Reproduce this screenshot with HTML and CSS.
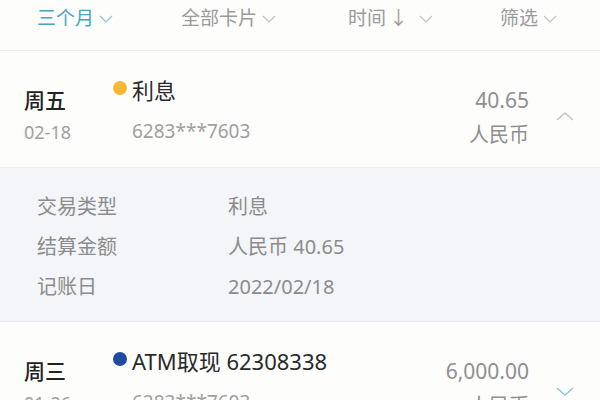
FILE: index.html
```html
<!DOCTYPE html>
<html lang="zh-CN">
<head>
  <meta charset="UTF-8" />
  <title>交易明细</title>
  <link rel="stylesheet" href="styles.css">
</head>
<body>
  <div class="tabs">
    <div class="tab active">三个月<svg class="caret" viewBox="0 0 14 8"><path d="M1 1l6 6 6-6"/></svg></div>
    <div class="tab">全部卡片<svg class="caret" viewBox="0 0 14 8"><path d="M1 1l6 6 6-6"/></svg></div>
    <div class="tab">时间<span class="sort">↓</span><svg class="caret" viewBox="0 0 14 8"><path d="M1 1l6 6 6-6"/></svg></div>
    <div class="tab">筛选<svg class="caret" viewBox="0 0 14 8"><path d="M1 1l6 6 6-6"/></svg></div>
  </div>

  <div class="record">
    <div class="day">
      <div class="weekday">周五</div>
      <div class="date">02-18</div>
    </div>
    <div class="info">
      <div class="title"><span class="dot yellow"></span>利息</div>
      <div class="card">6283***7603</div>
    </div>
    <div class="amount">
      <div class="money">40.65</div>
      <div class="currency">人民币</div>
    </div>
    <div class="toggle">
      <svg class="arrow up" viewBox="0 0 18 9"><path d="M1 8l8-7 8 7"/></svg>
    </div>
  </div>

  <div class="details">
    <div class="detail-row"><span class="label">交易类型</span><span class="value">利息</span></div>
    <div class="detail-row"><span class="label">结算金额</span><span class="value">人民币 40.65</span></div>
    <div class="detail-row"><span class="label">记账日</span><span class="value">2022/02/18</span></div>
  </div>

  <div class="record">
    <div class="day">
      <div class="weekday">周三</div>
      <div class="date">01-26</div>
    </div>
    <div class="info">
      <div class="title"><span class="dot blue"></span>ATM取现 62308338</div>
      <div class="card">6283***7603</div>
    </div>
    <div class="amount">
      <div class="money">6,000.00</div>
      <div class="currency">人民币</div>
    </div>
    <div class="toggle">
      <svg class="arrow down" viewBox="0 0 18 9"><path d="M1 1l8 7 8-7"/></svg>
    </div>
  </div>
</body>
</html>
```

FILE: styles.css
```css
body {
  margin: 0;
  background: #fdfdfc;
  font-family: "Noto Sans", "Noto Sans CJK SC", sans-serif;
  color: #222;
  overflow: hidden;
}
.tabs {
  display: grid;
  grid-template-columns: 144px 167px 152px auto;
  justify-items: start;
  height: 51px;
  padding: 5px 0 0 37px;
  box-sizing: border-box;
  border-bottom: 1px solid #ececec;
}
.tab {
  display: flex;
  align-items: flex-start;
  font-size: 19px;
  line-height: 26px;
  color: #9a9a9a;
}
.tab.active {
  color: #46a6bf;
}
.sort {
  margin: 0 6px 0 3px;
}
.caret {
  width: 14px;
  height: 8px;
  margin: 10px 0 0 5px;
  fill: none;
  stroke: #c2c2c2;
  stroke-width: 1.2;
}
.tab.active .caret {
  stroke: #8fc6d6;
}
.record {
  display: flex;
  height: 116px;
  background: #fdfdfc;
}
.day {
  width: 89px;
  padding: 35px 0 0 24px;
}
.weekday {
  font-size: 21px;
  line-height: 28px;
  font-weight: 500;
  color: #222;
}
.date {
  margin-top: 4px;
  font-size: 18px;
  line-height: 28px;
  color: #a0a0a0;
}
.info {
  flex: 1;
  padding-top: 25px;
}
.title {
  display: flex;
  align-items: center;
  font-size: 22px;
  line-height: 28px;
  color: #2a2a2a;
}
.dot {
  width: 14px;
  height: 14px;
  border-radius: 50%;
  margin: 0 5px 4px 0;
}
.dot.yellow {
  background: #f5b834;
}
.dot.blue {
  background: #1f4c9e;
}
.card {
  margin-top: 13px;
  padding-left: 19px;
  font-size: 19px;
  line-height: 28px;
  color: #a0a0a0;
}
.amount {
  padding-top: 35px;
  text-align: right;
  color: #8f8f8f;
}
.money {
  font-size: 21px;
  line-height: 28px;
}
.currency {
  margin-top: 7px;
  font-size: 20px;
  line-height: 28px;
}
.toggle {
  width: 71px;
  display: flex;
  justify-content: center;
  padding-top: 61px;
  box-sizing: border-box;
}
.arrow {
  width: 18px;
  height: 9px;
  fill: none;
  stroke-width: 1.4;
}
.arrow.up {
  stroke: #c4c4c4;
}
.arrow.down {
  stroke: #8fc6d6;
  margin-top: 4px;
}
.details {
  background: #f3f5f8;
  padding: 19px 0 14px 37px;
  border-top: 1px solid #eef0f3;
  border-bottom: 1px solid #e3e6ea;
}
.detail-row {
  display: flex;
  font-size: 20px;
  line-height: 40px;
  color: #8c8c8c;
}
.label {
  width: 191px;
}
```
